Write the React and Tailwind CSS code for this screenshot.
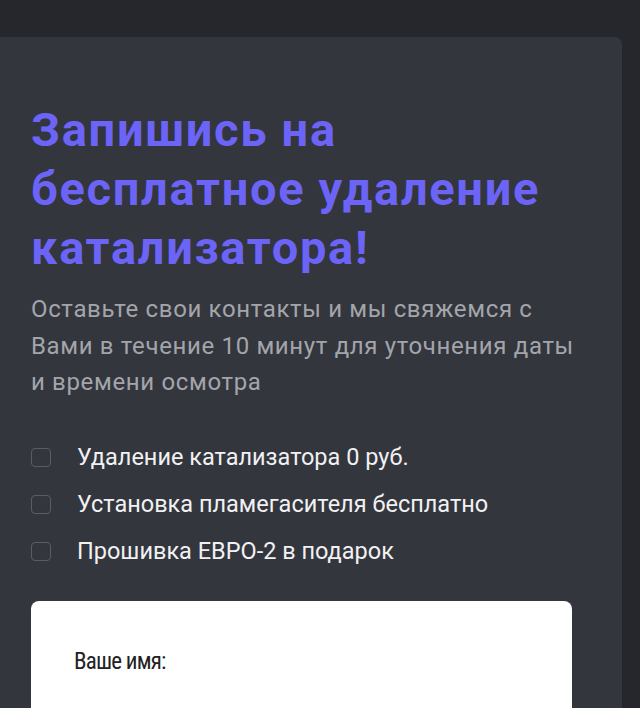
export default function App() {
  const perks = [
    "Удаление катализатора 0 руб.",
    "Установка пламегасителя бесплатно",
    "Прошивка ЕВРО-2 в подарок",
  ];

  return (
    <div
      className="w-[640px] h-[708px] overflow-hidden bg-[#26272c] pt-[37px] pr-[18px]"
      style={{ fontFamily: "Roboto, 'Liberation Sans', sans-serif" }}
    >
      <div className="h-[720px] bg-[#33363d] rounded-tr-[7px] pl-[31px] pr-[40px] pt-[63px]">
        <h1 className="text-[47px] font-bold leading-[59px] tracking-[1.7px] text-[#6c64f6]">
          Запишись на бесплатное удаление катализатора!
        </h1>
        <p className="mt-[14px] text-[24px] leading-[36.5px] tracking-[0.65px] text-[#a3a5ab]">
          Оставьте свои контакты и мы свяжемся с Вами в течение 10 минут для
          уточнения даты и времени осмотра
        </p>

        <ul className="mt-[33px] flex flex-col">
          {perks.map((p) => (
            <li key={p} className="h-[47px] flex items-center gap-[26px]">
              <span className="w-[20px] h-[19px] rounded-[4px] border border-[#5a5d65]" />
              <span className="text-[23.5px] leading-[30px] text-[#f1f1f3]">{p}</span>
            </li>
          ))}
        </ul>

        <div className="mt-[26px] mr-[10px] h-[200px] bg-white rounded-[8px] px-[43px] pt-[47px]">
          <label className="block text-[23px] leading-[28px] font-stretch-condensed tracking-[-0.8px] text-[#222]">
            Ваше имя:
          </label>
        </div>
      </div>
    </div>
  );
}
